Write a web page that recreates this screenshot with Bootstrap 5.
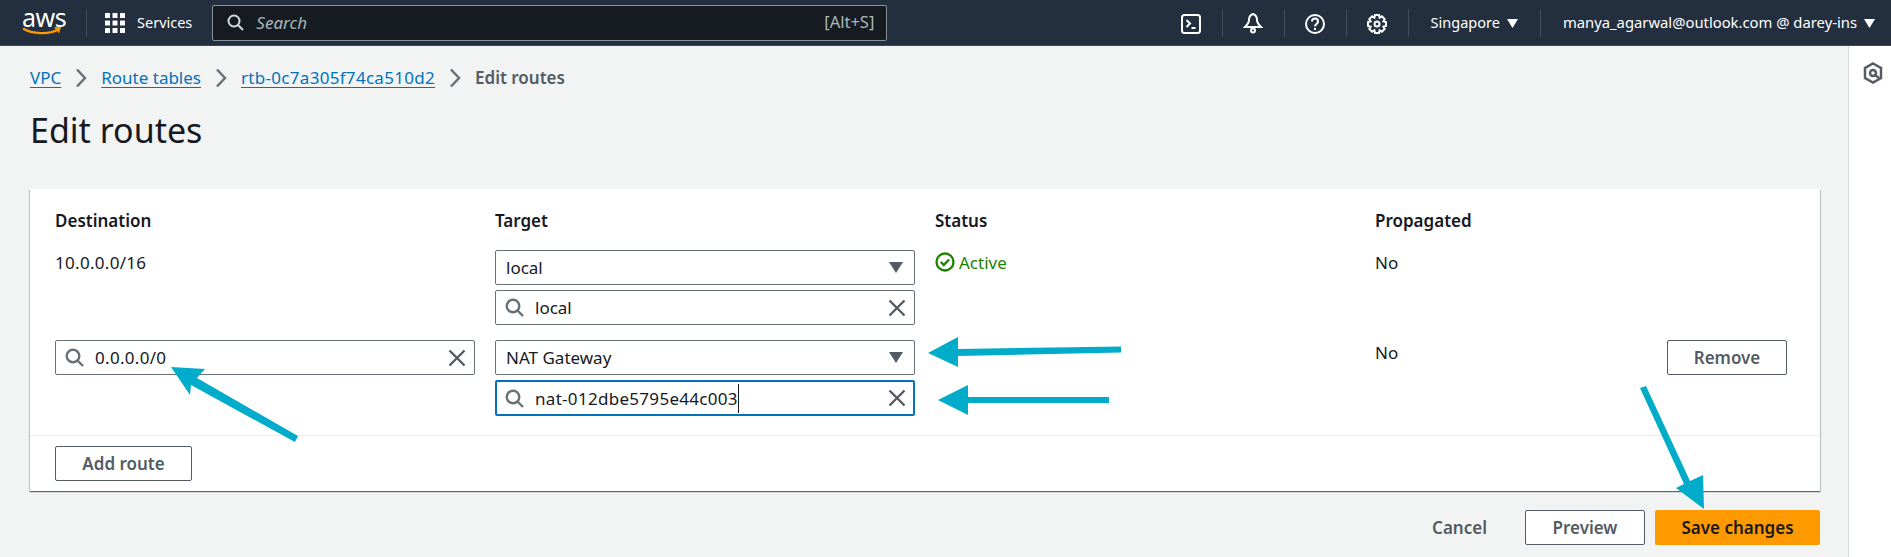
<!DOCTYPE html>
<html lang="en">
<head>
  <meta charset="UTF-8" />
  <title>Edit routes | VPC</title>
  <link href="https://cdn.jsdelivr.net/npm/bootstrap@5.3.3/dist/css/bootstrap.min.css" rel="stylesheet" />
  <style>
    html, body { height: 100%; }
    body {
      background: #f2f3f3;
      color: #16191f;
      font-family: "Noto Sans", "Open Sans", sans-serif;
      font-size: 17px;
      overflow: hidden;
      position: relative;
    }

    /* top bar */
    .top-bar {
      height: 46px;
      background: #232f3e;
      border-bottom: 1px solid #414750;
      color: #fff;
      font-size: 14.5px;
      padding: 0;
    }
    .aws-logo { width: 40px; margin-left: 22px; height: 36px; flex: none; }
    .aws-word { display: block; font-size: 25px; line-height: 24px; letter-spacing: -0.5px; text-align: center; margin-top: 0; }
    .aws-logo svg { display: block; margin-top: -3px; }
    .bar-rule { width: 1px; height: 28px; background: #414d5c; flex: none; }
    .grid-icon { margin-left: 18px; flex: none; }
    .global-search {
      width: 675px;
      height: 36px;
      margin-left: 20px;
      background: #161b22;
      border: 1px solid #879596;
      border-radius: 2px;
      padding: 0 12px 0 14px;
      color: #aab7b8;
      flex: none;
    }
    .global-search em { margin-left: 12px; font-size: 17px; }
    .global-search .keys { margin-left: auto; font-size: 16.5px; }
    .tool-icon { width: 61px; text-align: center; flex: none; }
    .tri-down { margin-left: 7px; }
    .bar-gap { margin-left: 22px; }
    .account-name { font-size: 14.8px; }

    /* content */
    .page-main { flex: 1 1 auto; min-width: 0; padding: 0 28px 0 30px; }
    .side-rail { width: 43px; background: #fff; border-left: 1px solid #d5dbdb; flex: none; padding-top: 13px; padding-left: 6px; text-align: center; }
    .crumbs { margin: 22px 0 0; font-size: 17px; line-height: 20px; align-items: center; }
    .crumbs a { color: #0073bb; text-decoration: underline; text-underline-offset: 3px; }
    .crumbs .sep { margin: 0 14px; display: flex; }
    .crumbs .here { color: #545b64; font-weight: 600; }
    .page-title { font-size: 34px; font-weight: 400; line-height: 40px; margin: 22px 0 0; }
    .wide-digits { letter-spacing: .3px; }

    .routes-card {
      margin-top: 39px;
      height: 302px;
      border: 0;
      border-radius: 0;
      box-shadow: 0 1px 1px 0 rgba(0, 28, 36, .5), 1px 1px 1px 0 rgba(0, 28, 36, .15), -1px 1px 1px 0 rgba(0, 28, 36, .15);
    }
    .routes-body { padding: 21px 33px 0 25px; flex: 1 1 auto; }
    .routes-grid { display: grid; grid-template-columns: 420px 420px 420px 1fr; column-gap: 20px; }
    .head-cell { font-weight: 600; line-height: 22px; height: 40px; }
    .plain-cell { line-height: 22px; padding-top: 2px; }
    .status-on { color: #1d8102; }
    .field-stack { display: flex; flex-direction: column; gap: 5px; margin-bottom: 15px; }
    .field-box {
      height: 35px;
      border: 1px solid #687078;
      border-radius: 2px;
      background: #fff;
      padding: 0 7px 0 9px;
      display: flex;
      align-items: center;
      line-height: 1;
    }
    .field-box .grow-text { flex: 1 1 auto; min-width: 0; }
    .field-box .lens { margin-right: 11px; flex: none; }
    .field-box .pick-tri { margin-right: 4px; flex: none; }
    .pick-box { padding-left: 10px; }
    .field-focus { height: 36px; border: 2px solid #0073bb; padding: 0 6px 0 8px; }
    .caret-mark { border-right: 1px solid #16191f; padding: 3px 0; }
    .btn-plain {
      height: 35px;
      border: 1px solid #545b64;
      border-radius: 2px;
      background: #fff;
      color: #545b64;
      font-size: 17px;
      font-weight: 600;
      padding: 0;
    }
    .remove-btn { width: 120px; }
    .add-btn { width: 137px; }
    .routes-foot { border-top: 1px solid #eaeded; height: 56px; padding: 10px 25px; }
    .page-actions { margin-top: 19px; gap: 10px; }
    .cancel-btn { color: #545b64; font-weight: 600; font-size: 17px; margin-right: 28px; }
    .preview-btn { width: 120px; }
    .save-btn {
      width: 165px;
      height: 35px;
      background: #f90;
      border: 0;
      border-radius: 2px;
      color: #16191f;
      font-size: 17px;
      font-weight: 600;
      padding: 0;
    }
    .arrow-layer { position: absolute; top: 0; left: 0; pointer-events: none; }
  </style>
</head>
<body class="d-flex flex-column">

<!-- Top bar -->
<nav class="navbar top-bar flex-nowrap justify-content-start">
  <div class="aws-logo">
    <span class="aws-word">aws</span>
    <svg width="40" height="10" viewBox="0 0 40 10"><path d="M1 2.500C10 8 27 9 36 3.500" fill="none" stroke="#f90" stroke-width="2.200"/><path d="M32 1.200 39 1 37 7.500Z" fill="#f90"/></svg>
  </div>
  <span class="bar-rule ms-4"></span>
  <svg class="grid-icon" width="20" height="20" viewBox="0 0 20 20" fill="#fff"><rect width="5" height="5" x="0" y="0" rx=".5"/><rect width="5" height="5" x="7.500" y="0" rx=".5"/><rect width="5" height="5" x="15" y="0" rx=".5"/><rect width="5" height="5" x="0" y="7.500" rx=".5"/><rect width="5" height="5" x="7.500" y="7.500" rx=".5"/><rect width="5" height="5" x="15" y="7.500" rx=".5"/><rect width="5" height="5" x="0" y="15" rx=".5"/><rect width="5" height="5" x="7.500" y="15" rx=".5"/><rect width="5" height="5" x="15" y="15" rx=".5"/></svg>
  <span class="ms-2 ps-1">Services</span>
  <div class="global-search d-flex align-items-center">
    <svg width="17" height="17" viewBox="0 0 17 17" fill="none" stroke="#d5dbdb" stroke-width="2"><circle cx="7" cy="7" r="5.500"/><path d="M11 11l5 5"/></svg>
    <em>Search</em>
    <span class="keys">[Alt+S]</span>
  </div>
  <div class="d-flex align-items-center ms-auto">
    <span class="tool-icon">
      <svg width="20" height="20" viewBox="0 0 20 20" fill="none" stroke="#fff" stroke-width="2"><rect x="1" y="1" width="18" height="18" rx="2.500"/><path d="M5.500 6l3.500 3.500L5.500 13M10.500 14h4"/></svg>
    </span>
    <span class="bar-rule"></span>
    <span class="tool-icon">
      <svg width="20" height="22" viewBox="0 0 20 22" fill="none" stroke="#fff" stroke-width="2"><path d="M10 2c-3 1-4 3.500-4 6 0 3-2 5-4 7h16c-2-2-4-4-4-7 0-2.500-1-5-4-6z"/><circle cx="10" cy="18.500" r="2"/></svg>
    </span>
    <span class="bar-rule"></span>
    <span class="tool-icon">
      <svg width="20" height="20" viewBox="0 0 20 20" fill="none" stroke="#fff" stroke-width="2"><circle cx="10" cy="10" r="9"/><path d="M7 7.500c0-4 6-4 6 0 0 2.500-3 2.500-3 5"/><path d="M10 14v2"/></svg>
    </span>
    <span class="bar-rule"></span>
    <span class="tool-icon">
      <svg width="20" height="20" viewBox="0 0 20 20" fill="none" stroke="#fff" stroke-width="2"><path d="M8 1h4l.6 2.600 2.300-1.300 2.800 2.800-1.300 2.300L19 8v4l-2.600.6 1.300 2.300-2.800 2.800-2.300-1.300L12 19H8l-.6-2.600-2.300 1.300-2.800-2.800 1.300-2.300L1 12V8l2.600-.6-1.300-2.300 2.800-2.800 2.300 1.300z"/><circle cx="10" cy="10" r="2.500"/></svg>
    </span>
    <span class="bar-rule"></span>
    <span class="bar-gap d-flex align-items-center">Singapore
      <svg class="tri-down" width="11" height="10" viewBox="0 0 11 10" fill="#fff"><path d="M0 1h11L5.500 10z"/></svg>
    </span>
    <span class="bar-rule bar-gap"></span>
    <span class="account-name bar-gap d-flex align-items-center me-3">manya_agarwal@outlook.com @ darey-ins
      <svg class="tri-down" width="11" height="10" viewBox="0 0 11 10" fill="#fff"><path d="M0 1h11L5.500 10z"/></svg>
    </span>
  </div>
</nav>

<div class="d-flex flex-grow-1">
  <main class="page-main">
    <nav aria-label="breadcrumb">
      <ol class="breadcrumb crumbs">
        <li><a href="#">VPC</a></li>
        <li class="sep"><svg width="12" height="20" viewBox="0 0 12 20" fill="none" stroke="#687078" stroke-width="2.500"><path d="M2 1.500l8 8.500-8 8.500"/></svg></li>
        <li><a href="#">Route tables</a></li>
        <li class="sep"><svg width="12" height="20" viewBox="0 0 12 20" fill="none" stroke="#687078" stroke-width="2.500"><path d="M2 1.500l8 8.500-8 8.500"/></svg></li>
        <li><a class="wide-digits" href="#">rtb-0c7a305f74ca510d2</a></li>
        <li class="sep"><svg width="12" height="20" viewBox="0 0 12 20" fill="none" stroke="#687078" stroke-width="2.500"><path d="M2 1.500l8 8.500-8 8.500"/></svg></li>
        <li class="here">Edit routes</li>
      </ol>
    </nav>
    <h1 class="page-title">Edit routes</h1>

    <div class="card routes-card">
      <div class="routes-body">
        <div class="routes-grid">
          <div class="head-cell">Destination</div>
          <div class="head-cell">Target</div>
          <div class="head-cell">Status</div>
          <div class="head-cell">Propagated</div>

          <div class="plain-cell wide-digits">10.0.0.0/16</div>
          <div class="field-stack">
            <div class="field-box pick-box">
              <span class="grow-text">local</span>
              <svg class="pick-tri" width="14" height="11" viewBox="0 0 14 11" fill="#545b64"><path d="M0 0h14L7 11z"/></svg>
            </div>
            <div class="field-box">
              <svg class="lens" width="19" height="19" viewBox="0 0 19 19" fill="none" stroke="#687078" stroke-width="2.400"><circle cx="8" cy="8" r="6.300"/><path d="M12.500 12.500l5.500 5.500"/></svg>
              <span class="grow-text">local</span>
              <svg width="20" height="20" viewBox="0 0 20 20" fill="none" stroke="#545b64" stroke-width="2.400"><path d="M2.500 2.500l15 15M17.500 2.500l-15 15"/></svg>
            </div>
          </div>
          <div class="plain-cell status-on d-flex gap-1">
            <svg width="20" height="20" viewBox="0 0 20 20" fill="none" stroke="#1d8102" stroke-width="2.300"><circle cx="10" cy="10" r="8.500"/><path d="M5.800 10l3 3 5.200-5.500"/></svg>
            <span>Active</span>
          </div>
          <div class="plain-cell">No</div>

          <div>
            <div class="field-box">
              <svg class="lens" width="19" height="19" viewBox="0 0 19 19" fill="none" stroke="#687078" stroke-width="2.400"><circle cx="8" cy="8" r="6.300"/><path d="M12.500 12.500l5.500 5.500"/></svg>
              <span class="grow-text wide-digits">0.0.0.0/0</span>
              <svg width="20" height="20" viewBox="0 0 20 20" fill="none" stroke="#545b64" stroke-width="2.400"><path d="M2.500 2.500l15 15M17.500 2.500l-15 15"/></svg>
            </div>
          </div>
          <div class="field-stack mb-0">
            <div class="field-box pick-box">
              <span class="grow-text">NAT Gateway</span>
              <svg class="pick-tri" width="14" height="11" viewBox="0 0 14 11" fill="#545b64"><path d="M0 0h14L7 11z"/></svg>
            </div>
            <div class="field-box field-focus">
              <svg class="lens" width="19" height="19" viewBox="0 0 19 19" fill="none" stroke="#687078" stroke-width="2.400"><circle cx="8" cy="8" r="6.300"/><path d="M12.500 12.500l5.500 5.500"/></svg>
              <span class="grow-text"><span class="caret-mark wide-digits">nat-012dbe5795e44c003</span></span>
              <svg width="20" height="20" viewBox="0 0 20 20" fill="none" stroke="#545b64" stroke-width="2.400"><path d="M2.500 2.500l15 15M17.500 2.500l-15 15"/></svg>
            </div>
          </div>
          <div></div>
          <div class="d-flex justify-content-between align-items-start">
            <span class="plain-cell">No</span>
            <button type="button" class="btn btn-plain remove-btn">Remove</button>
          </div>
        </div>
      </div>
      <div class="routes-foot">
        <button type="button" class="btn btn-plain add-btn">Add route</button>
      </div>
    </div>

    <div class="d-flex justify-content-end align-items-center page-actions">
      <span class="cancel-btn">Cancel</span>
      <button type="button" class="btn btn-plain preview-btn">Preview</button>
      <button type="button" class="btn save-btn">Save changes</button>
    </div>
  </main>
  <aside class="side-rail">
    <svg width="20" height="22" viewBox="0 0 20 22" fill="none" stroke="#545b64" stroke-width="2.500"><path d="M10 1.500l8 4.500v10l-8 4.500L2 16V6z"/><circle cx="10" cy="11" r="3"/><path d="M12 13l4 3"/></svg>
  </aside>
</div>

<!-- annotation arrows drawn on top of the screenshot -->
<svg class="arrow-layer" width="1891" height="557" viewBox="0 0 1891 557" fill="#00acc9">
  <path d="M171 367 205 369 197 378 298 436 295 442 191 385 190 395Z"/>
  <path d="M928 353 958 337V349L1121 346.500V352.500L958 356V367Z"/>
  <path d="M938 400 968 385V397H1109V403H968V415Z"/>
  <path d="M1640 388 1646 386 1690 481 1703 475 1704 509 1676 488 1684 484Z"/>
</svg>

</body>
</html>
